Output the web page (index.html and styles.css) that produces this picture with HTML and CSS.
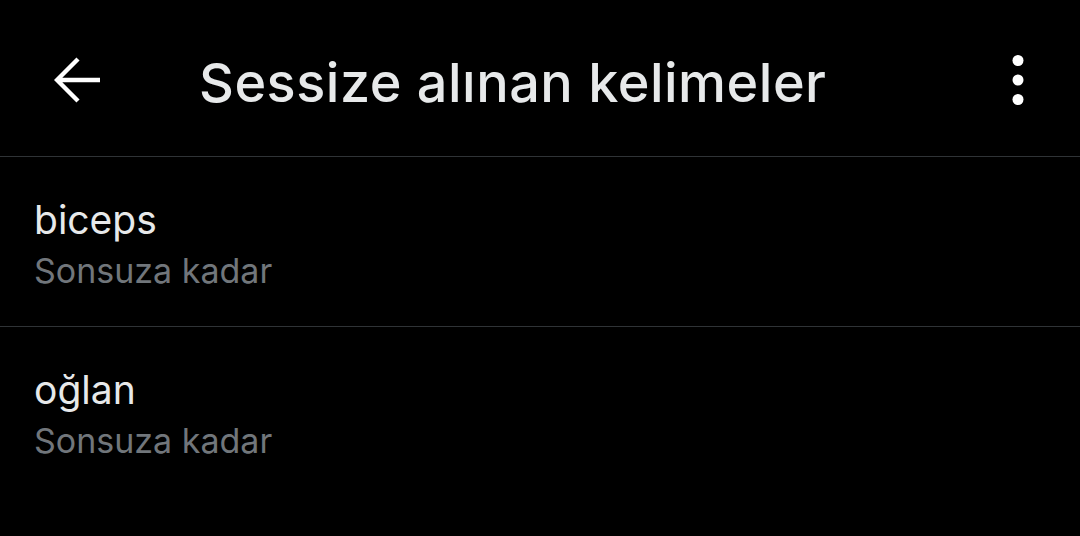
FILE: index.html
```html
<!DOCTYPE html>
<html lang="tr">
<head>
<meta charset="utf-8">
<link rel="stylesheet" href="styles.css">
</head>
<body>
<header class="topbar">
  <div class="back">
    <svg width="48" height="48" viewBox="0 0 48 48"><path d="M46 24H5M24 3L3 24 24 45" fill="none" stroke="#ffffff" stroke-width="4.4" stroke-linecap="butt" stroke-linejoin="miter"/></svg>
  </div>
  <h1 class="title">Sessize alınan kelimeler</h1>
  <div class="more">
    <svg width="20" height="56" viewBox="0 0 20 56"><circle cx="10" cy="8.5" r="5.5" fill="#fff"/><circle cx="10" cy="28" r="5.5" fill="#fff"/><circle cx="10" cy="47.5" r="5.5" fill="#fff"/></svg>
  </div>
</header>
<main class="list">
  <div class="row">
    <div class="word">biceps</div>
    <div class="dur">Sonsuza kadar</div>
  </div>
  <div class="row">
    <div class="word">oğlan</div>
    <div class="dur">Sonsuza kadar</div>
  </div>
</main>
</body>
</html>
```
FILE: styles.css
```css
html, body {
  margin: 0;
  padding: 0;
  background: #000;
  width: 1080px;
  height: 536px;
  overflow: hidden;
  font-family: Inter, Roboto, "Liberation Sans", sans-serif;
}
.topbar {
  box-sizing: border-box;
  height: 157px;
  border-bottom: 1px solid #2f3336;
  display: flex;
  align-items: center;
}
.back {
  width: 48px;
  height: 48px;
  margin-left: 54px;
  margin-top: 4px;
}
.back svg { display: block; }
.title {
  margin: 8px 0 0 97px;
  font-size: 54px;
  letter-spacing: 0.5px;
  font-weight: 500;
  color: #e7e9ea;
  flex: 1;
  white-space: nowrap;
}
.more {
  margin-right: 52px;
  margin-top: 3px;
}
.more svg { display: block; }
.row {
  height: 170px;
  box-sizing: border-box;
  border-bottom: 1px solid #2f3336;
  padding: 39px 34px 0;
}
.row:last-child { border-bottom: none; }
.word {
  font-size: 39px;
  color: #e7e9ea;
  line-height: 48px;
}
.dur {
  font-size: 34px;
  color: #71767b;
  line-height: 44px;
  margin-top: 5px;
}
```
